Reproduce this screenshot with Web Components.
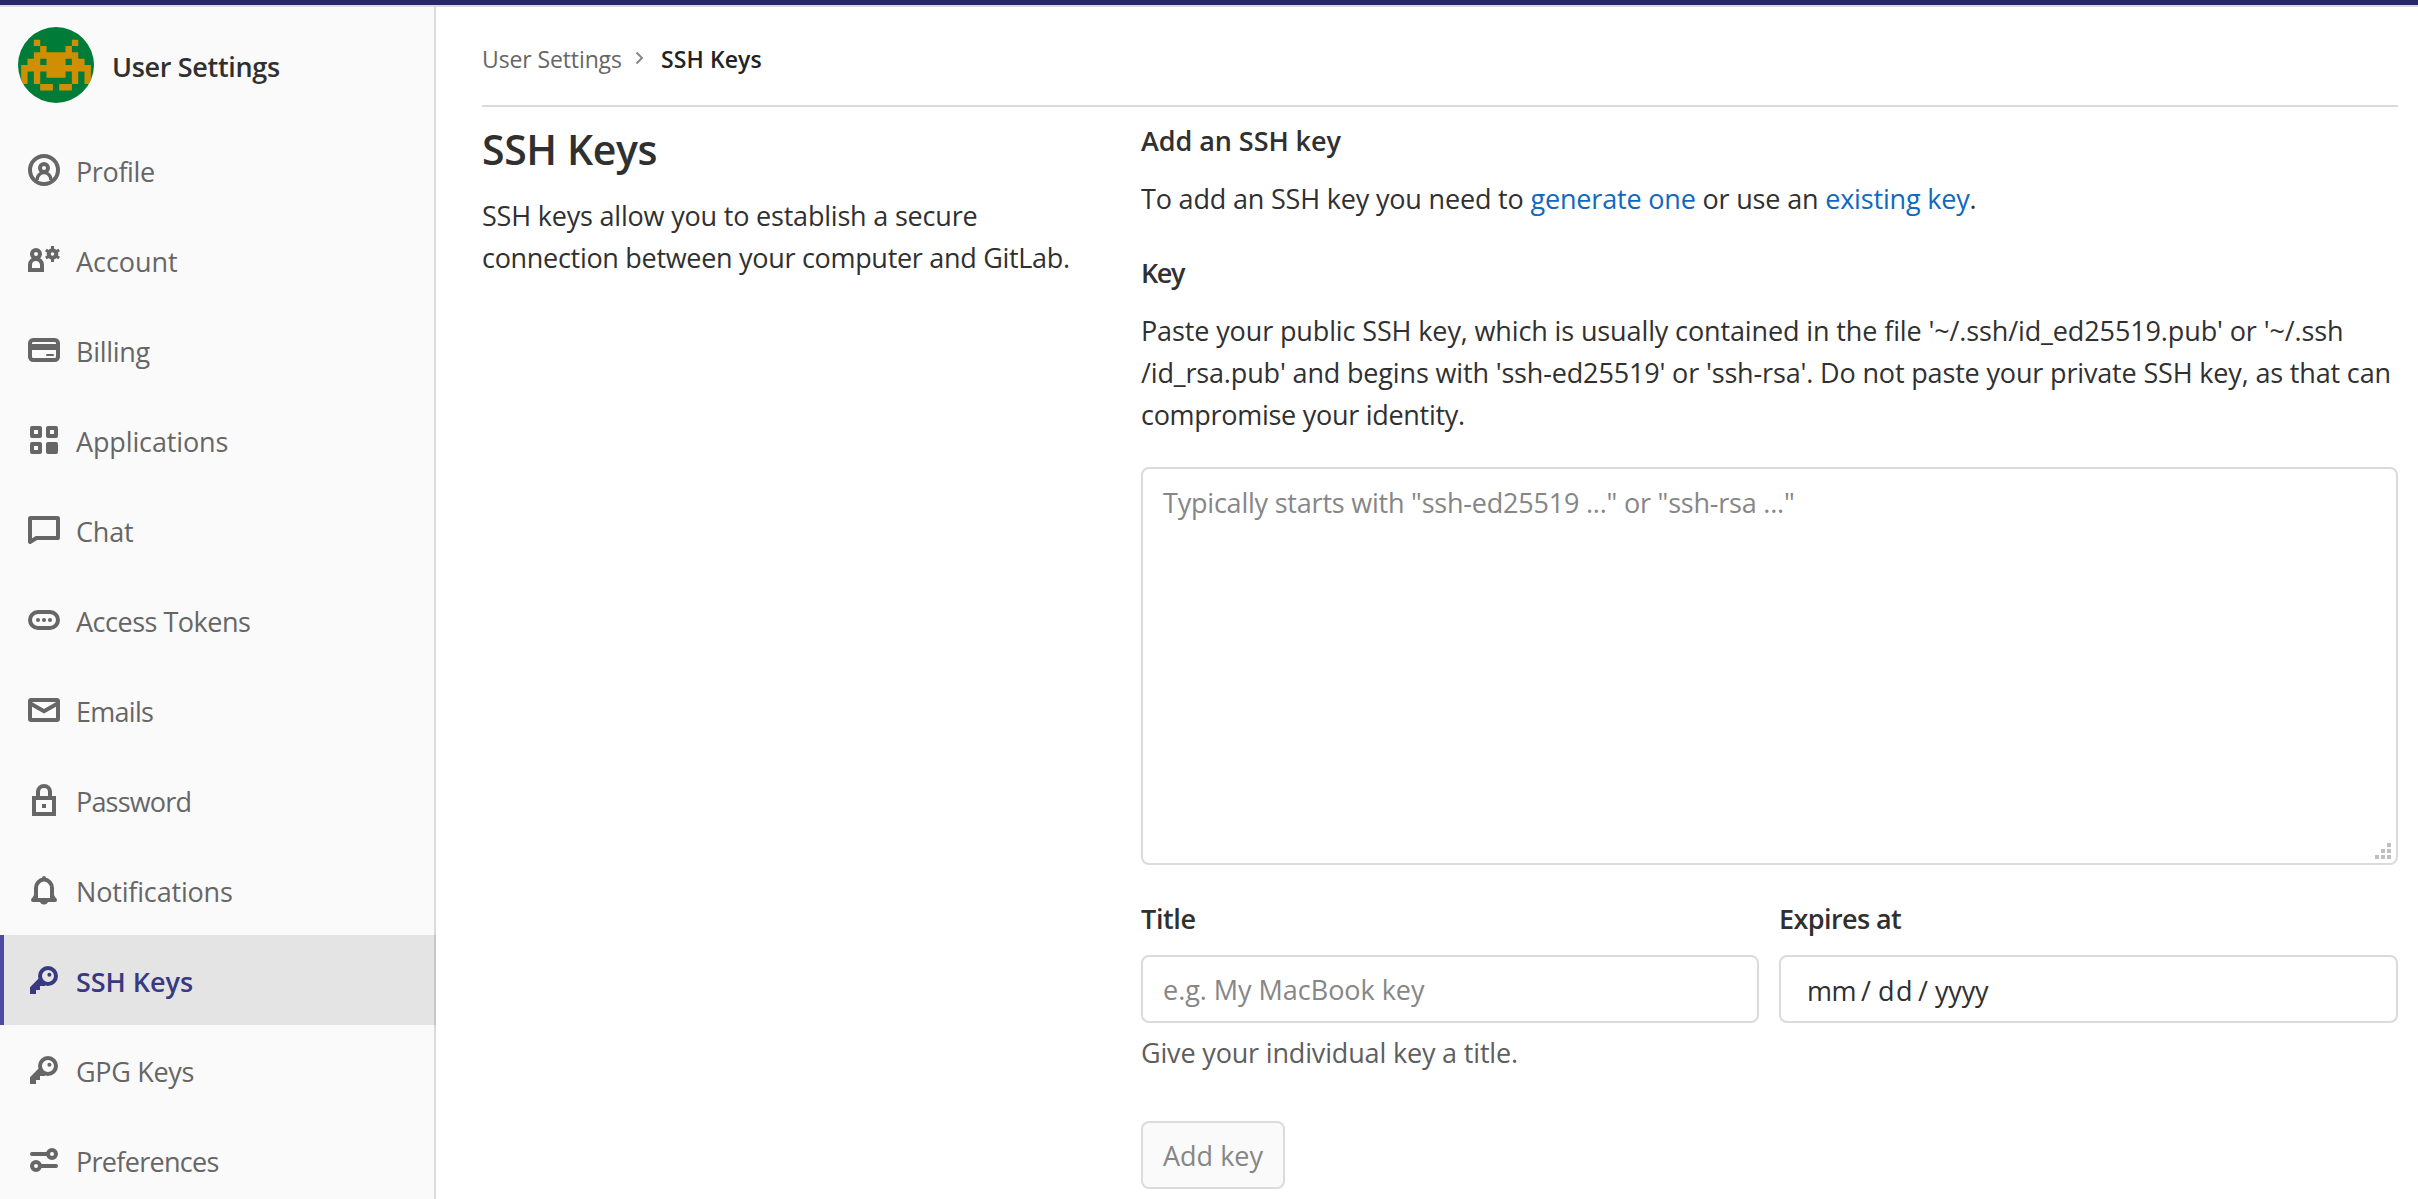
<!DOCTYPE html>
<html lang="en">
<head>
<meta charset="utf-8">
<title>SSH Keys · User Settings</title>
<style>
  html, body { margin: 0; height: 100%; }
  body { overflow: hidden; background: #fff; color: #303030; font-family: "Open Sans", "Noto Sans", sans-serif; font-size: 27px; line-height: 42px; }
</style>
</head>
<body>
<settings-page></settings-page>
<script>
const define = (name, html, setup) => {
  const template = document.createElement('template');
  template.innerHTML = html.trim();
  customElements.define(name, class extends HTMLElement {
    connectedCallback() {
      if (this.shadowRoot) return;
      this.attachShadow({ mode: 'open' }).append(template.content.cloneNode(true));
      if (setup) setup(this, this.shadowRoot);
    }
  });
};

/* One line of text, tracked so that its last glyph ends `extent` pixels from the line's start. */
const pen = document.createElement('canvas').getContext('2d');
define('text-line', `<style>:host { display: block; white-space: nowrap; }</style><slot></slot>`,
  host => {
    const text = host.textContent;
    const cs = getComputedStyle(host);
    pen.font = `${cs.fontWeight} ${cs.fontSize} ${cs.fontFamily}`;
    const natural = pen.measureText(text).actualBoundingBoxRight;
    host.style.letterSpacing = ((host.getAttribute('extent') - natural) / (text.length - 1)).toFixed(3) + 'px';
  });

const ICONS = {
  profile: '<circle cx="8" cy="8" r="7"/><circle cx="8" cy="7" r="2"/><path stroke-width="1.7" d="M4.6 13v-.6A3.4 3.3 0 0 1 8 9.3a3.4 3.3 0 0 1 3.4 3.1v.6"/>',
  account: '<circle cx="4" cy="5" r="2"/><path d="M1 13h6v-2.5a3 3 0 0 0-6 0z"/><circle cx="12.25" cy="5" r="1.9"/><path stroke-width="1.5" d="M12.25 1v1.6M12.25 7.4V9M8.9 3l1.4.8M14.2 6.2l1.4.8M15.6 3l-1.4.8M10.3 6.2 8.9 7"/>',
  billing: '<rect x="1" y="3" width="14" height="10" rx="1.6"/><path fill="currentColor" stroke="none" d="M1 5h14v3H1z"/><path stroke-width="1" stroke-linecap="round" d="M9.5 10.5h3"/>',
  applications: '<g fill="currentColor" stroke="none" fill-rule="evenodd"><path d="M2 1h4a1 1 0 0 1 1 1v4a1 1 0 0 1-1 1H2a1 1 0 0 1-1-1V2a1 1 0 0 1 1-1zm1 2v2h2V3z"/><path d="M10 1h4a1 1 0 0 1 1 1v4a1 1 0 0 1-1 1h-4a1 1 0 0 1-1-1V2a1 1 0 0 1 1-1zm1 2v2h2V3z"/><path d="M2 9h4a1 1 0 0 1 1 1v4a1 1 0 0 1-1 1H2a1 1 0 0 1-1-1v-4a1 1 0 0 1 1-1zm1 2v2h2v-2z"/><rect x="9" y="9" width="6" height="6" rx="1"/></g>',
  chat: '<path stroke-linejoin="round" d="M1 14V2.3q0-.3.3-.3h13.4q.3 0 .3.3v9.4q0 .3-.3.3H4.2z"/>',
  token: '<rect x="1" y="4" width="14" height="8" rx="4"/><g fill="currentColor" stroke="none"><circle cx="5" cy="8" r="1"/><circle cx="8" cy="8" r="1"/><circle cx="11" cy="8" r="1"/></g>',
  mail: '<rect x="1" y="3" width="14" height="10" rx=".6"/><path d="M1.2 4.7 8 8.6l6.8-3.9"/>',
  lock: '<path d="M3 7h10v8H3zM5 7V4a3 3 0 0 1 6 0v3"/><path fill="currentColor" stroke="none" d="M7 10h2v2H7z"/>',
  bell: '<path d="M4 12.500V7a4 4.200 0 0 1 8 0v5.500"/><path stroke-linecap="round" d="M2.500 13h11"/><path fill="currentColor" stroke="none" d="M7 2a1 1 0 0 1 2 0v1.500H7zM6 13.500h4a2 1.700 0 0 1-4 0zM3 10.500v2H1.800zM13 10.500v2h1.200z"/>',
  key: '<circle cx="10" cy="6" r="4"/><g fill="currentColor" stroke="none"><circle cx="10.7" cy="5.4" r="1"/><path d="M5.3 7.3 1 11.6V15h3v-2h2v-2h2.4l.4-.5z"/></g>',
  sliders: '<circle cx="12" cy="5" r="2"/><circle cx="4" cy="11" r="2"/><path stroke-linecap="round" d="M2 5h8M6 11h8"/>'
};
define('ui-icon', `
  <style>:host { display: block; width: 32px; height: 32px; flex: none; } svg { display: block; width: 100%; height: 100%; }</style>
  <svg viewBox="0 0 16 16" fill="none" stroke="currentColor" stroke-width="2"></svg>`,
  (host, root) => { root.querySelector('svg').innerHTML = ICONS[host.getAttribute('name')]; });

const INVADER = ['..#.....#..', '...#...#...', '..#######..', '.##.###.##.', '###########', '#.#.###.#.#', '#.#.....#.#', '...##.##...'];
define('user-avatar', `
  <style>
    :host { display: block; width: 76px; height: 76px; border-radius: 50%; overflow: hidden; background: #007c38; }
    svg { display: block; filter: blur(.5px); }
  </style>
  <svg width="76" height="76" viewBox="0 0 12 12" fill="#d08f03"></svg>`,
  (host, root) => {
    root.querySelector('svg').innerHTML = '<path d="' + INVADER.map((row, y) =>
      [...row].map((c, x) => c === '#' ? `M${x + .5} ${y + 2}h1.01v1.01h-1.01z` : '').join('')).join('') + '"/>';
  });

define('nav-item', `
  <style>
    :host { display: flex; align-items: center; gap: 16px; height: 90px; padding-left: 28px; box-sizing: border-box; color: #666; }
    :host([active]) { background: rgba(0,0,0,.085); box-shadow: inset 4px 0 #4b4ba3; color: #393982; font-weight: 600; }
    .label { padding-top: 3px; }
  </style>
  <ui-icon></ui-icon><div class="label"><slot></slot></div>`,
  (host, root) => root.querySelector('ui-icon').replaceWith(Object.assign(document.createElement('template'), { innerHTML: `<ui-icon name="${host.getAttribute('icon')}"></ui-icon>` }).content));

define('side-bar', `
  <style>
    :host { display: block; width: 434px; flex: none; background: #fafafa; border-right: 2px solid #dbdbdb; }
    header { display: flex; gap: 18px; padding: 20px 18px 22px; align-items: center; font-weight: 600; }
    header text-line { padding-top: 3px; }
    nav-item { margin-right: -2px; }
  </style>
  <header><user-avatar></user-avatar><text-line extent="168">User Settings</text-line></header>
  <nav>
    <nav-item icon="profile"><text-line extent="78">Profile</text-line></nav-item>
    <nav-item icon="account"><text-line extent="101">Account</text-line></nav-item>
    <nav-item icon="billing"><text-line extent="74.5">Billing</text-line></nav-item>
    <nav-item icon="applications"><text-line extent="151.5">Applications</text-line></nav-item>
    <nav-item icon="chat"><text-line extent="57">Chat</text-line></nav-item>
    <nav-item icon="token"><text-line extent="174">Access Tokens</text-line></nav-item>
    <nav-item icon="mail"><text-line extent="77">Emails</text-line></nav-item>
    <nav-item icon="lock"><text-line extent="114.5">Password</text-line></nav-item>
    <nav-item icon="bell"><text-line extent="156">Notifications</text-line></nav-item>
    <nav-item icon="key" active><text-line extent="117">SSH Keys</text-line></nav-item>
    <nav-item icon="key"><text-line extent="117.5">GPG Keys</text-line></nav-item>
    <nav-item icon="sliders"><text-line extent="142.5">Preferences</text-line></nav-item>
  </nav>`);

define('bread-crumbs', `
  <style>
    :host { display: flex; height: 100px; padding-top: 34px; box-sizing: border-box; border-bottom: 2px solid #dbdbdb; font-size: 23px; line-height: 36px; color: #666; }
    text-line { flex: none; }
    .from { width: 139px; }
    svg { margin: 10px 17px 0 14px; flex: none; }
    .here { color: #222; font-weight: 600; }
  </style>
  <text-line class="from" extent="139">User Settings</text-line>
  <svg width="9" height="14" viewBox="0 0 9 14" fill="none" stroke="#868686" stroke-width="2"><path d="M1.500 1.500 7 7l-5.500 5.500"/></svg>
  <text-line class="here" extent="100.500">SSH Keys</text-line>`);

define('form-box', `
  <style>
    :host { display: block; box-sizing: border-box; height: 68px; border: 2px solid #dbdbdb; border-radius: 8px; background: #fff; color: #868686; padding: 12px 20px 10px; }
    :host([muted]) { background: #fafafa; width: 144px; }
    :host([area]) { display: flex; flex-direction: column; justify-content: space-between; height: 398px; padding: 13px 5px 4px 20px; }
    svg { display: none; align-self: flex-end; }
    :host([area]) svg { display: block; }
  </style>
  <slot></slot>
  <svg width="16" height="16" fill="#bfbfbf"><path d="M12 0h4v4h-4zM6 6h4v4H6zM12 6h4v4h-4zM0 12h4v4H0zM6 12h4v4H6zM12 12h4v4h-4z"/></svg>`);

define('date-field', `
  <style>
    :host { display: flex; padding: 1px 0 0 6px; color: #303030; }
    .m { width: 54px; } .s { width: 17px; } .d { width: 40px; }
  </style>
  <text-line class="m" extent="47.500">mm</text-line><span class="s">/</span><text-line class="d" extent="33">dd</text-line><span class="s">/</span><text-line extent="54">yyyy</text-line>`);

define('key-form', `
  <style>
    :host { display: block; }
    h5 { margin: 0; font: inherit; font-weight: 600; }
    a { color: #1068bf; text-decoration: none; }
    .gap { padding-top: 16px; } .sec { padding-top: 32px; }
    .area { margin: 31px 0 33px; }
    .pair { display: grid; grid-template-columns: 618px 619px; gap: 20px; }
    .pair form-box { margin-top: 15px; }
    .help { color: #5e5e5e; padding-top: 9px; }
    .save { margin-top: 47px; }
  </style>
  <h5><text-line extent="200.500">Add an SSH key</text-line></h5>
  <text-line class="gap" extent="834.500">To add an SSH key you need to <a>generate one</a> or use an <a>existing key</a>.</text-line>
  <h5 class="sec"><text-line extent="45">Key</text-line></h5>
  <div class="gap">
    <text-line extent="1201">Paste your public SSH key, which is usually contained in the file '~/.ssh/id_ed25519.pub' or '~/.ssh</text-line>
    <text-line extent="1248.500">/id_rsa.pub' and begins with 'ssh-ed25519' or 'ssh-rsa'. Do not paste your private SSH key, as that can</text-line>
    <text-line extent="323">compromise your identity.</text-line>
  </div>
  <form-box class="area" area><text-line extent="630">Typically starts with "ssh-ed25519 ..." or "ssh-rsa ..."</text-line></form-box>
  <div class="pair">
    <div>
      <h5><text-line extent="54.500">Title</text-line></h5>
      <form-box><text-line extent="262">e.g. My MacBook key</text-line></form-box>
      <text-line class="help" extent="376">Give your individual key a title.</text-line>
    </div>
    <div>
      <h5><text-line extent="122">Expires at</text-line></h5>
      <form-box><date-field></date-field></form-box>
    </div>
  </div>
  <form-box class="save" muted><text-line extent="100.500">Add key</text-line></form-box>`);

define('settings-page', `
  <style>
    :host { display: flex; flex-direction: column; height: 100%; border-top: 5px solid #292961; box-sizing: border-box; }
    .body { display: flex; flex: 1; min-height: 0; border-top: 2px solid #dbdbdb; }
    main { flex: 1; padding: 0 20px 0 46px; }
    .cols { display: grid; grid-template-columns: 639px 1257px; gap: 20px; padding-top: 13px; }
    h4 { margin: 3px 0 20px; font-size: 41px; line-height: 52px; font-weight: 600; }
  </style>
  <div class="body">
    <side-bar></side-bar>
    <main>
      <bread-crumbs></bread-crumbs>
      <div class="cols">
        <section>
          <h4><text-line extent="174.500">SSH Keys</text-line></h4>
          <text-line extent="494.500">SSH keys allow you to establish a secure</text-line>
          <text-line extent="587">connection between your computer and GitLab.</text-line>
        </section>
        <key-form></key-form>
      </div>
    </main>
  </div>`);
</script>
</body>
</html>
